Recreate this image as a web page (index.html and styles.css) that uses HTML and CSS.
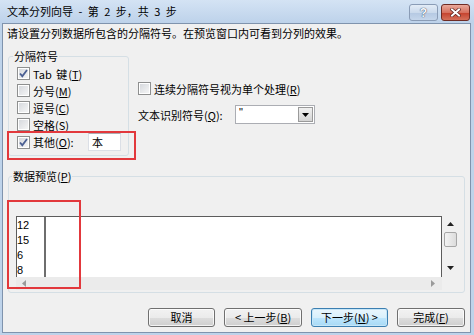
FILE: index.html
```html
<!DOCTYPE html>
<html lang="zh-CN">
<head>
    <meta charset="UTF-8">
    <meta name="viewport" content="width=device-width, initial-scale=1.0">
    <title>文本分列向导</title>
    <link rel="stylesheet" href="styles.css">
</head>
<body>
    <div class="window">
        <div class="titlebar">
            <span class="title">文本分列向导 - 第 2 步，共 3 步</span>
            <span class="cap-btn help">?</span>
            <span class="cap-btn close">
                <svg width="11" height="9" viewBox="0 0 11 9">
                    <path d="M2 1.5 L9 7.5 M9 1.5 L2 7.5" stroke="#5a1e1a" stroke-width="3.4" stroke-linecap="square"/>
                    <path d="M2 1.5 L9 7.5 M9 1.5 L2 7.5" stroke="#fff" stroke-width="2" stroke-linecap="square"/>
                </svg>
            </span>
        </div>

        <div class="client">
            <p class="intro">请设置分列数据所包含的分隔符号。在预览窗口内可看到分列的效果。</p>

            <div class="options">
                <fieldset class="group delims">
                    <legend>分隔符号</legend>
                    <div class="check-row"><span class="box checked"><svg width="11" height="11" viewBox="0 0 11 11"><path d="M2 5.5 L4.3 8.2 L9 2" fill="none" stroke="#4b5f93" stroke-width="1.8"/></svg></span><span class="tab">Tab 键</span>(<u>T</u>)</div>
                    <div class="check-row"><span class="box"></span>分号(<u>M</u>)</div>
                    <div class="check-row"><span class="box"></span>逗号(<u>C</u>)</div>
                    <div class="check-row"><span class="box"></span>空格(<u>S</u>)</div>
                    <div class="check-row other"><span class="box checked"><svg width="11" height="11" viewBox="0 0 11 11"><path d="M2 5.5 L4.3 8.2 L9 2" fill="none" stroke="#4b5f93" stroke-width="1.8"/></svg></span>其他(<u>O</u>):<span class="textbox">本</span></div>
                </fieldset>

                <div class="side">
                    <div class="check-row"><span class="box"></span>连续分隔符号视为单个处理(<u>R</u>)</div>
                    <div class="qualifier">
                        文本识别符号(<u>Q</u>):
                        <span class="combo">
                            <span class="combo-value">"</span>
                            <span class="combo-arrow"><svg width="7" height="4" viewBox="0 0 7 4"><polygon points="0,0 7,0 3.5,4" fill="#000"/></svg></span>
                        </span>
                    </div>
                </div>
            </div>

            <fieldset class="group preview-group">
                <legend>数据预览(<u>P</u>)</legend>
                <div class="preview">
                    <div class="sheet">
                        <div class="col">
                            <div>12</div>
                            <div>15</div>
                            <div>6</div>
                            <div>8</div>
                        </div>
                    </div>
                    <div class="vscroll">
                        <span class="arrow"><svg width="7" height="4" viewBox="0 0 7 4"><polygon points="0,4 7,4 3.5,0" fill="#222"/></svg></span>
                        <span class="thumb"></span>
                        <span class="track"></span>
                        <span class="arrow"><svg width="7" height="4" viewBox="0 0 7 4"><polygon points="0,0 7,0 3.5,4" fill="#222"/></svg></span>
                    </div>
                    <div class="hscroll">
                        <svg width="4" height="7" viewBox="0 0 4 7"><polygon points="4,0 4,7 0,3.5" fill="#9a9a9a"/></svg>
                        <svg width="4" height="7" viewBox="0 0 4 7"><polygon points="0,0 0,7 4,3.5" fill="#9a9a9a"/></svg>
                    </div>
                    <div class="corner"></div>
                </div>
            </fieldset>

            <div class="buttons">
                <button class="btn w-cancel">取消</button>
                <button class="btn w-back">&lt; 上一步(<u>B</u>)</button>
                <button class="btn btn-default w-next">下一步(<u>N</u>) &gt;</button>
                <button class="btn w-finish">完成(<u>F</u>)</button>
            </div>
        </div>

        <div class="mark mark-other"></div>
        <div class="mark mark-column"></div>
    </div>
</body>
</html>
```

FILE: styles.css
```css
* { box-sizing: border-box; }
body { margin: 0; font-family: "Noto Sans CJK SC", "Liberation Sans", sans-serif; font-size: 11px; color: #000; }
u { text-decoration: underline; text-underline-offset: 1px; }

.window { position: relative; width: 474px; height: 335px; background: #bed3ea; overflow: hidden; }

/* title bar */
.titlebar { height: 23px; display: flex; align-items: flex-start; padding: 4px 4px 0 7px; background: linear-gradient(#d4e3f4, #bdd2ea); }
.title { flex: 1; font-size: 11px; line-height: 15px; word-spacing: 3px; }
.cap-btn { width: 29px; height: 17px; display: flex; align-items: center; justify-content: center; border-radius: 3px; }
.help { margin-right: 3px; border: 1px solid #8a9cb6; background: linear-gradient(#e3ecf7 0%, #cbdaec 50%, #b4c8e2 51%, #c5d6eb 100%); color: #f6f8fb; font: bold 12px "Liberation Sans", sans-serif; text-shadow: 0 0 1px #3d4f6a, 0 0 1px #3d4f6a; }
.close { border: 1px solid #6e2b24; background: linear-gradient(#e9a99b 0%, #d7715f 50%, #c4402c 51%, #d5705a 100%); }

/* client area */
.client { height: 310px; margin: 0 3px 0 2px; border: 1px solid #7f93ad; background: #f0f0f0; }
.intro { margin: 0; padding: 2px 0 0 4px; line-height: 14px; }

.options { display: flex; align-items: flex-start; padding: 9px 0 0 5px; }

.group { margin: 0; min-width: 0; border: 1px solid #d5dfe5; border-radius: 3px; }
.group legend { padding: 0 1px; margin-left: -4px; line-height: 14px; }

.delims { width: 121px; padding: 2px 7px 4px 8px; }

.check-row { display: flex; align-items: center; height: 17px; white-space: nowrap; }
.box { width: 13px; height: 13px; margin-right: 3px; flex: none; display: flex; align-items: center; justify-content: center; border: 1px solid #8e8f8f; background: linear-gradient(135deg, #d3d6db, #f8f8f8); box-shadow: inset 0 0 0 1px #fff; }
.tab { margin-right: 1px; word-spacing: 2px; }
.other { height: 18px; }
.textbox { width: 33px; height: 18px; margin-left: auto; padding-left: 3px; line-height: 16px; background: #fff; border: 1px solid #dbdfe6; border-top-color: #abadb3; }

.side { margin: 31px 0 0 9px; }
.qualifier { width: 177px; height: 19px; margin-top: 8px; display: flex; align-items: center; white-space: nowrap; }
.combo { width: 80px; height: 19px; margin-left: auto; display: flex; justify-content: space-between; padding: 1px; background: #fff; border: 1px solid #abadb3; }
.combo-value { padding-left: 2px; line-height: 10px; font-family: "Liberation Sans", sans-serif; }
.combo-arrow { width: 15px; display: flex; align-items: center; justify-content: center; border: 1px solid #9a9a9a; background: linear-gradient(#f0f0f0, #d4d4d4); }

/* preview */
.preview-group { width: 457px; margin: 13px 0 0 5px; padding: 33px 6px 2px 7px; }
.preview { display: grid; grid-template-columns: 1fr 16px; grid-template-rows: 61px 13px; }
.sheet { background: #fff; border: 1px solid #5c5c5c; border-bottom: none; }
.col { width: 29px; height: 100%; padding-top: 1px; border-right: 2px solid #6e6e6e; font-family: "Liberation Sans", sans-serif; line-height: 15px; }
.vscroll { display: flex; flex-direction: column; align-items: center; }
.vscroll .arrow { height: 16px; display: flex; align-items: center; }
.vscroll .arrow:last-child { height: 19px; }
.thumb { width: 13px; height: 15px; border: 1px solid #a6a6a6; border-radius: 2px; background: linear-gradient(90deg, #f3f3f3, #dcdcdc); }
.track { flex: 1; }
.hscroll { display: flex; align-items: center; justify-content: space-between; padding: 0 7px 0 6px; background: #ebebeb; }

/* buttons */
.buttons { display: flex; justify-content: flex-end; gap: 9px; margin-top: 15px; padding-right: 5px; }
.btn { height: 19px; padding: 0; font: 11px "Noto Sans CJK SC", "Liberation Sans", sans-serif; line-height: 17px; color: #000; border: 1px solid #707070; border-radius: 3px; background: linear-gradient(#f2f2f2 0%, #ebebeb 50%, #dddddd 51%, #cfcfcf 100%); box-shadow: inset 0 0 0 1px rgba(255, 255, 255, 0.75); }
.btn-default { border-color: #3c7fb1; background: linear-gradient(#eaf6fd 0%, #d9f0fc 50%, #bee6fd 51%, #a7d9f5 100%); box-shadow: inset 0 0 0 1px #c6e6f8; }
.w-cancel { width: 67px; }
.w-back { width: 78px; }
.w-next { width: 77px; }
.w-finish { width: 68px; }

/* red annotations drawn over the dialog */
.mark { position: absolute; border: 2px solid #e2383c; }
.mark-other { left: 7px; top: 131px; width: 129px; height: 29px; }
.mark-column { left: 7px; top: 200px; width: 74px; height: 89px; }
```
